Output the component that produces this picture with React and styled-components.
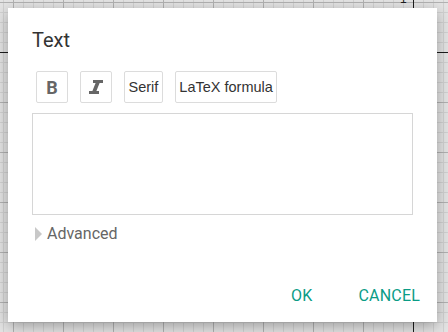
import React from 'react';
import styled, { createGlobalStyle } from 'styled-components';

const Global = createGlobalStyle`
  html, body { margin: 0; padding: 0; }
  body { font-family: Roboto, "Liberation Sans", sans-serif; }
`;

const Canvas = styled.div`
  position: relative;
  width: 448px;
  height: 332px;
  box-sizing: border-box;
  padding: 8px 11px 10px 8px;
  display: flex;
  overflow: hidden;
  background-color: #e4e4e4;
  background-image:
    linear-gradient(#1c1c1c, #1c1c1c),
    linear-gradient(#1c1c1c, #1c1c1c),
    linear-gradient(to right, #b2b2b2 1px, transparent 1px),
    linear-gradient(to bottom, #b2b2b2 1px, transparent 1px),
    linear-gradient(to right, #d2d2d2 1px, transparent 1px),
    linear-gradient(to bottom, #d2d2d2 1px, transparent 1px);
  background-size: 1px 100%, 100% 1px, 50px 50px, 50px 50px, 10px 10px, 10px 10px;
  background-position: 413px 0, 0 52px, 13px 2px, 13px 2px, 3px 2px, 3px 2px;
  background-repeat: no-repeat, no-repeat, repeat, repeat, repeat, repeat;
`;

const TickLabel = styled.span`
  position: absolute;
  left: 400px;
  top: -8px;
  font: 12px "Liberation Sans", sans-serif;
  color: #1c1c1c;
`;

const Dialog = styled.div`
  position: relative;
  flex: 1;
  background: #fff;
  box-shadow: 0 4px 14px rgba(0, 0, 0, 0.32);
  display: flex;
  flex-direction: column;
`;

const Body = styled.div`
  padding: 20px 24px 0 24px;
  display: flex;
  flex-direction: column;
`;

const Title = styled.div`
  font-size: 20px;
  color: #333;
  line-height: 24px;
  margin-bottom: 19px;
`;

const Toolbar = styled.div`
  display: flex;
  gap: 12px;
  padding-left: 4px;
  margin-bottom: 10px;
`;

const ToolButton = styled.button`
  height: 32px;
  min-width: 32px;
  box-sizing: border-box;
  padding: 0 ${p => (p.$icon ? 0 : 3.5)}px;
  border: 1px solid #dcdcdc;
  border-radius: 2px;
  background: #fff;
  color: #333;
  font-family: ${p => (p.$icon ? 'Roboto, sans-serif' : '"Liberation Sans", sans-serif')};
  font-size: ${p => (p.$icon ? 18 : 14.5)}px;
  font-weight: ${p => (p.$icon ? 700 : 400)};
  display: flex;
  align-items: center;
  justify-content: center;
  ${p => p.$icon && 'color: #666;'}
`;

const TextBox = styled.div`
  height: 102px;
  box-sizing: border-box;
  border: 1px solid #d6d6d6;
  margin-bottom: 9px;
`;

const Advanced = styled.div`
  display: flex;
  align-items: center;
  gap: 5px;
  padding-left: 3px;
  font-size: 16px;
  color: #666;
  line-height: 20px;
`;

const Arrow = styled.span`
  width: 0;
  height: 0;
  border-top: 7px solid transparent;
  border-bottom: 7px solid transparent;
  border-left: 7px solid #c8c8c8;
`;

const Footer = styled.div`
  margin-top: auto;
  display: flex;
  justify-content: flex-end;
  gap: 46px;
  padding: 0 17px 17px 0;
`;

const ActionButton = styled.button`
  border: none;
  background: none;
  padding: 0;
  font-family: Roboto, sans-serif;
  font-size: 16px;
  letter-spacing: 0.2px;
  color: #0a9c86;
  text-transform: uppercase;
`;

function ItalicIcon() {
  return (
    <svg width="16" height="14" viewBox="0 0 16 14" fill="#666">
      <path d="M5 0h10v3h-3.4l-3.2 8H11v3H1v-3h3.4l3.2-8H5z" />
    </svg>
  );
}

export default function App() {
  return (
    <>
      <Global />
      <Canvas>
        <TickLabel>1</TickLabel>
        <Dialog>
          <Body>
            <Title>Text</Title>
            <Toolbar>
              <ToolButton $icon>B</ToolButton>
              <ToolButton $icon><ItalicIcon /></ToolButton>
              <ToolButton>Serif</ToolButton>
              <ToolButton>LaTeX formula</ToolButton>
            </Toolbar>
            <TextBox />
            <Advanced>
              <Arrow />
              Advanced
            </Advanced>
          </Body>
          <Footer>
            <ActionButton>OK</ActionButton>
            <ActionButton>Cancel</ActionButton>
          </Footer>
        </Dialog>
      </Canvas>
    </>
  );
}
